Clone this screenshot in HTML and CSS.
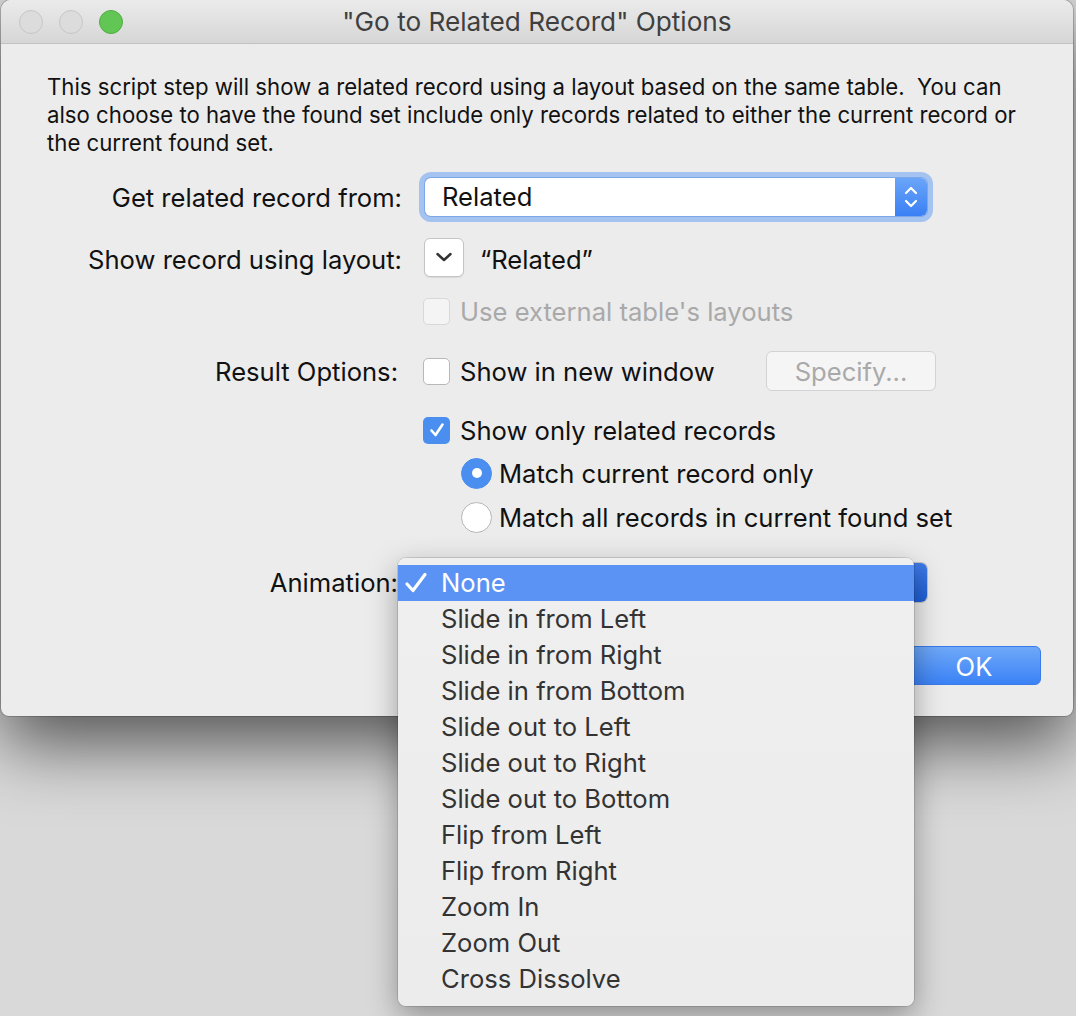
FILE: index.html
```html
<!DOCTYPE html>
<html lang="en">
<head>
    <meta charset="UTF-8">
    <meta name="viewport" content="width=device-width, initial-scale=1.0">
    <title>"Go to Related Record" Options</title>
    <link rel="stylesheet" href="styles.css">
</head>
<body>
    <div class="window">
        <div class="titlebar">
            <div class="lights">
                <span class="light"></span>
                <span class="light"></span>
                <span class="light light-green"></span>
            </div>
            <div class="title">"Go to Related Record" Options</div>
        </div>

        <div class="content">
            <p class="intro">This script step will show a related record using a layout based on the same table.&nbsp; You can<br>also choose to have the found set include only records related to either the current record or<br>the current found set.</p>

            <div class="form">
                <div class="row row-first">
                    <span class="label">Get related record from:</span>
                    <div class="popup popup-focused">
                        <span class="popup-value">Related</span>
                        <span class="stepper">
                            <svg width="14" height="26" viewBox="0 0 14 26"><path d="M2 9 L7 4 L12 9 M2 17 L7 22 L12 17" fill="none" stroke="#fff" stroke-width="2.2" stroke-linecap="round" stroke-linejoin="round"/></svg>
                        </span>
                    </div>
                </div>

                <div class="row row-layout">
                    <span class="label label-low">Show record using layout:</span>
                    <span class="menu-button">
                        <svg width="18" height="12" viewBox="0 0 18 12"><path d="M2.5 3 L9 9 L15.5 3" fill="none" stroke="#333" stroke-width="2.5" stroke-linecap="round" stroke-linejoin="round"/></svg>
                    </span>
                    <span class="layout-name">“Related”</span>
                </div>

                <div class="row row-external indent">
                    <span class="checkbox checkbox-disabled"></span>
                    <span class="check-label disabled">Use external table's layouts</span>
                </div>

                <div class="row row-result">
                    <span class="label label-result">Result Options:</span>
                    <span class="checkbox"></span>
                    <span class="check-label">Show in new window</span>
                    <span class="button button-disabled specify">Specify...</span>
                </div>

                <div class="row row-only indent">
                    <span class="checkbox checkbox-checked">
                        <svg width="18" height="16" viewBox="0 0 18 16"><path d="M3.5 8.5 L7.5 13 L14.5 2.5" fill="none" stroke="#fff" stroke-width="2.6" stroke-linecap="round" stroke-linejoin="round"/></svg>
                    </span>
                    <span class="check-label">Show only related records</span>
                </div>

                <div class="row row-radio1 indent-radio">
                    <span class="radio radio-on"></span>
                    <span class="radio-label">Match current record only</span>
                </div>

                <div class="row row-radio2 indent-radio">
                    <span class="radio"></span>
                    <span class="radio-label">Match all records in current found set</span>
                </div>

                <div class="row row-animation">
                    <span class="label label-animation">Animation:</span>
                    <div class="popup popup-animation">
                        <span class="popup-value">None</span>
                        <span class="stepper stepper-pressed"></span>
                    </div>
                </div>

                <div class="row row-buttons">
                    <span class="button">Cancel</span>
                    <span class="button button-default">OK</span>
                </div>
            </div>
        </div>
    </div>

    <ul class="menu">
        <li class="menu-item selected">
            <svg class="tick" width="24" height="24" viewBox="0 0 24 24"><path d="M3 13 L9 19.5 L21 3.5" fill="none" stroke="#fff" stroke-width="3.2" stroke-linecap="round" stroke-linejoin="round"/></svg>
            None
        </li>
        <li class="menu-item">Slide in from Left</li>
        <li class="menu-item">Slide in from Right</li>
        <li class="menu-item">Slide in from Bottom</li>
        <li class="menu-item">Slide out to Left</li>
        <li class="menu-item">Slide out to Right</li>
        <li class="menu-item">Slide out to Bottom</li>
        <li class="menu-item">Flip from Left</li>
        <li class="menu-item">Flip from Right</li>
        <li class="menu-item">Zoom In</li>
        <li class="menu-item">Zoom Out</li>
        <li class="menu-item">Cross Dissolve</li>
    </ul>
</body>
</html>
```

FILE: styles.css
```css
body {
    margin: 0;
    height: 1016px;
    overflow: hidden;
    background: #d9d9d9;
    font-family: Inter, "Liberation Sans", sans-serif;
    font-size: 25.6px;
    color: #111;
}
.window {
    width: 1072px;
    margin-left: 1px;
    background: #ececec;
    border-radius: 10px 10px 8px 8px;
    box-shadow: 0 0 0 1px rgba(0, 0, 0, 0.18), 0 28px 70px rgba(0, 0, 0, 0.62);
}
.titlebar {
    height: 43px;
    display: grid;
    grid-template-columns: 1fr auto 1fr;
    align-items: center;
    background: linear-gradient(#ebebeb, #d6d6d6);
    border-bottom: 1px solid #c1c1c1;
    border-radius: 10px 10px 0 0;
}
.lights {
    display: flex;
    gap: 16px;
    padding-left: 18px;
}
.light {
    width: 22px;
    height: 22px;
    border-radius: 50%;
    background: #dcdcdc;
    border: 1px solid #c6c6c6;
}
.light-green {
    background: #62c655;
    border-color: #52ad43;
}
.title {
    color: #3f3f3f;
    font-size: 26.2px;
}
.content {
    padding: 29px 32px 31px 46px;
}
.intro {
    margin: 0;
    line-height: 28px;
    font-size: 22.2px;
    white-space: nowrap;
}
.form {
    display: flex;
    flex-direction: column;
}
.row {
    display: flex;
    align-items: center;
    height: 40px;
}
.row-first { margin-top: 20px; }
.row-layout { margin-top: 20px; }
.row-external { margin-top: 14px; }
.row-result { margin-top: 20px; }
.row-only { margin-top: 19px; }
.row-radio1 { margin-top: 3px; }
.row-radio2 { margin-top: 4px; }
.row-animation { margin-top: 25px; }
.row-buttons {
    margin-top: 43px;
    justify-content: flex-end;
    gap: 12px;
}
.label {
    width: 355px;
    margin-right: 21px;
    text-align: right;
}
.label-low {
    padding-top: 5px;
}
.label-result, .label-animation {
    width: 351px;
    margin-right: 25px;
}
.indent {
    padding-left: 376px;
}
.indent-radio {
    padding-left: 414px;
}
.popup {
    display: flex;
    align-items: stretch;
    height: 38px;
    width: 502px;
    margin-left: 2px;
    background: #fff;
    border-radius: 6px;
    box-shadow: 0 0 0 1px #c3c3c3;
}
.popup-focused {
    box-shadow: 0 0 0 1px #7ea7e8, 0 0 0 6px #a5c3f1;
}
.popup-value {
    flex: 1;
    padding-left: 17px;
    line-height: 38px;
}
.stepper {
    width: 32px;
    display: flex;
    align-items: center;
    justify-content: center;
    background: linear-gradient(#6ba5f8, #3a80f5);
    border-radius: 0 6px 6px 0;
}
.stepper-pressed {
    background: linear-gradient(#3f7ae6, #1f5fd6);
}
.popup-animation {
    width: 502px;
    height: 39px;
}
.menu-button {
    width: 38px;
    height: 37px;
    margin-left: 1px;
    display: flex;
    align-items: center;
    justify-content: center;
    background: #fff;
    border: 1px solid #c4c4c4;
    border-radius: 6px;
    box-shadow: 0 1px 1px rgba(0, 0, 0, 0.08);
}
.layout-name {
    margin-left: 16px;
    padding-top: 5px;
}
.checkbox {
    width: 25px;
    height: 25px;
    flex: none;
    display: flex;
    align-items: center;
    justify-content: center;
    background: #fff;
    border: 1px solid #b8b8b8;
    border-radius: 5px;
}
.checkbox-disabled {
    background: #f4f4f4;
    border-color: #d8d8d8;
}
.checkbox-checked {
    width: 27px;
    height: 27px;
    border: none;
    background: #4a8ff0;
}
.check-label {
    margin-left: 10px;
}
.disabled {
    color: #a9a9a9;
}
.radio {
    width: 31px;
    height: 31px;
    flex: none;
    background: #fff;
    border: 1px solid #b6b6b6;
    border-radius: 50%;
    box-sizing: border-box;
    display: flex;
    align-items: center;
    justify-content: center;
}
.radio-on {
    background: #4a8ff0;
    border-color: #4a8ff0;
}
.radio-on::after {
    content: "";
    width: 10px;
    height: 10px;
    border-radius: 50%;
    background: #fff;
}
.radio-label {
    margin-left: 7px;
}
.button {
    width: 134px;
    height: 39px;
    line-height: 39px;
    text-align: center;
    background: #fff;
    border: 1px solid #c4c4c4;
    border-radius: 6px;
    box-sizing: border-box;
}
.button-disabled {
    background: #f5f5f5;
    border-color: #d3d3d3;
    color: #a9a9a9;
}
.specify {
    width: 170px;
    height: 40px;
    line-height: 40px;
    margin-left: auto;
    margin-right: 105px;
}
.button-default {
    color: #fff;
    background: linear-gradient(#6ea8f8, #3b82f6);
    border-color: #3b7aea;
}
.menu {
    position: absolute;
    left: 398px;
    top: 558px;
    width: 516px;
    margin: 0;
    padding: 7px 0 9px;
    list-style: none;
    box-sizing: border-box;
    background: linear-gradient(#efefef, #ececec);
    border-radius: 8px;
    box-shadow: 0 0 0 1px rgba(0, 0, 0, 0.12), 0 10px 30px rgba(0, 0, 0, 0.35);
}
.menu-item {
    position: relative;
    height: 36px;
    line-height: 36px;
    padding-left: 43px;
    color: #333;
}
.menu-item.selected {
    background: #5b93f4;
    color: #fff;
}
.tick {
    position: absolute;
    left: 6px;
    top: 6px;
}
```
